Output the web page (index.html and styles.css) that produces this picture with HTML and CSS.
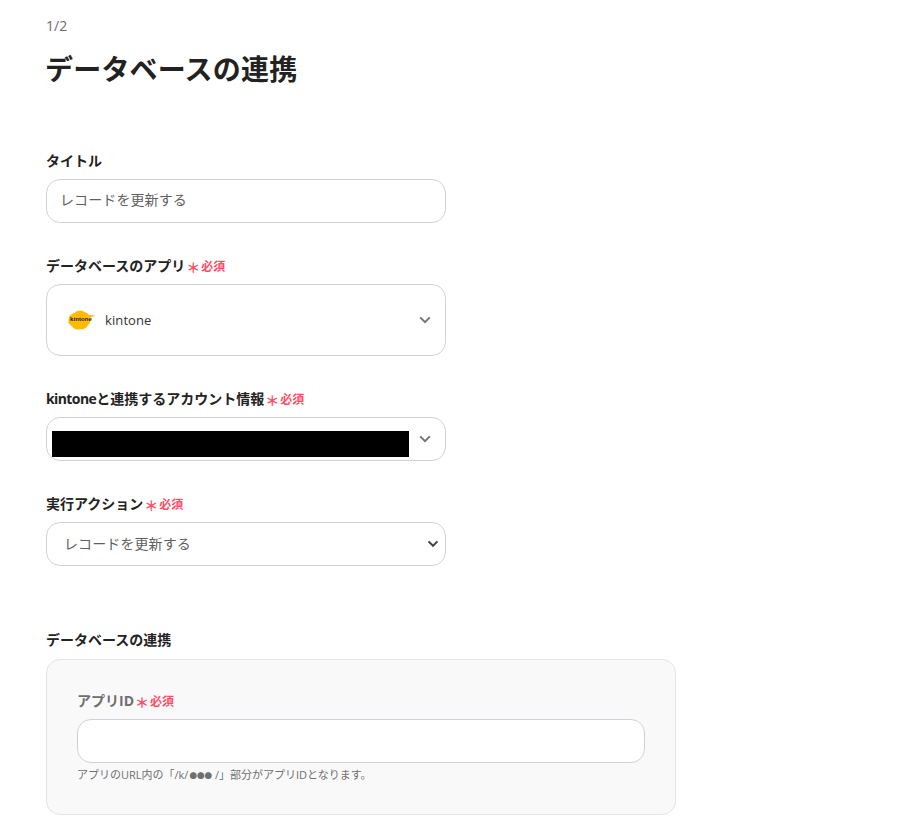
FILE: index.html
```html
<!DOCTYPE html>
<html lang="ja">
<head>
<meta charset="utf-8">
<title>データベースの連携</title>
<link rel="stylesheet" href="styles.css">
</head>
<body>
<main class="page">
  <p class="step">1/2</p>
  <h1 class="title">データベースの連携</h1>

  <section class="field field-title">
    <label class="label">タイトル</label>
    <input class="control" type="text" value="レコードを更新する">
  </section>

  <section class="field field-app">
    <label class="label">データベースのアプリ<span class="req"><span class="star">＊</span>必須</span></label>
    <div class="control picker picker-tall">
      <svg class="logo" width="29" height="20" viewBox="0 0 29 20" aria-hidden="true">
        <path d="M1.500 10C1.500 6 5 3 8 3 10 0 15 0 17 2 19 2 21 3.500 22 5L29 5.500 23 7.500C24 11 23 14 21 15 20 18 16 20 13 19 10 20.500 6 19 5 16 2 15.500 1 12 1.500 10Z" fill="#ffbb00"/>
        <text x="3" y="11" class="logo-text">kintone</text>
      </svg>
      <span class="picker-text">kintone</span>
      <svg class="chev" width="12" height="8" viewBox="0 0 12 8" aria-hidden="true"><path d="M1.200 1.400 6 6.200l4.800-4.800" fill="none" stroke="#757575" stroke-width="2"/></svg>
    </div>
  </section>

  <section class="field field-account">
    <label class="label"><span class="latin-tight">kintone</span>と連携するアカウント情報<span class="req"><span class="star">＊</span>必須</span></label>
    <div class="control picker picker-account">
      <span class="redact"></span>
      <svg class="chev" width="12" height="8" viewBox="0 0 12 8" aria-hidden="true"><path d="M1.200 1.400 6 6.200l4.800-4.800" fill="none" stroke="#757575" stroke-width="2"/></svg>
    </div>
  </section>

  <section class="field field-action">
    <label class="label">実行アクション<span class="req"><span class="star">＊</span>必須</span></label>
    <select class="control select"><option>レコードを更新する</option></select>
  </section>

  <section class="field field-db">
    <h2 class="label">データベースの連携</h2>
    <div class="panel">
      <label class="label label-muted">アプリID<span class="req"><span class="star">＊</span>必須</span></label>
      <input class="control control-wide" type="text">
      <p class="hint">アプリのURL内の「/k/<span class="dots">●●●</span>/」部分がアプリIDとなります。</p>
    </div>
  </section>
</main>
</body>
</html>
```

FILE: styles.css
```css
* { box-sizing: border-box; }
html, body { margin: 0; padding: 0; background: #fff; }
body {
  font-family: "Open Sans", "Noto Sans CJK JP", sans-serif;
  color: #222;
  height: 840px;
  overflow: hidden;
}
.page { padding: 18px 0 0 46px; }
.step { margin: 0; font-size: 14px; line-height: 16px; color: #6e6872; }
.title {
  margin: 15px 0 0 -1px;
  font-size: 28px;
  line-height: 40px;
  font-weight: 700;
  letter-spacing: 0.2px;
  color: #222;
}
.field { display: flex; flex-direction: column; align-items: flex-start; }
.field-title { margin-top: 62px; }
.field-app { margin-top: 33px; }
.field-account { margin-top: 33px; }
.field-action { margin-top: 33px; }
.field-db { margin-top: 64px; }
.label {
  display: flex;
  align-items: center;
  margin: 0 0 8px;
  height: 20px;
  font-size: 14px;
  line-height: 20px;
  font-weight: 700;
  color: #222;
}
.label-muted { color: #6f6f6f; }
.latin-tight { letter-spacing: -0.6px; }
.req {
  display: inline-flex;
  align-items: center;
  margin-left: 1px;
  padding-top: 2px;
  font-size: 12px;
  font-weight: 700;
  color: #ff4d67;
}
.star { font-size: 14px; margin-right: 1px; position: relative; top: 1px; }
.control {
  width: 400px;
  height: 44px;
  border: 1px solid #cfd2d9;
  border-radius: 14px;
  background: #fff;
  font-family: inherit;
  font-size: 14px;
  letter-spacing: 0.1px;
  color: #5f5f5f;
  padding: 0 13px 4px;
  outline: none;
}
.picker { display: flex; align-items: center; padding: 0; }
.picker-tall { height: 72px; padding: 0 14px 0 20px; }
.picker-account { padding: 0 14px 0 5px; }
.logo { flex: none; }
.logo-text { font-family: "Liberation Sans", sans-serif; font-size: 6px; font-weight: 700; fill: #2a2000; }
.picker-text { margin-left: 9px; font-size: 13px; color: #333; }
.chev { margin-left: auto; flex: none; }
.redact { display: block; width: 357px; height: 26px; background: #000; margin-top: 10px; }
.select {
  appearance: none;
  padding: 0 24px 2px 17px;
  color: #5f5f5f;
  background: #fff url("data:image/svg+xml,%3Csvg xmlns='http://www.w3.org/2000/svg' width='12' height='8' viewBox='0 0 12 8'%3E%3Cpath d='M1.500 1.400 6 5.800l4.500-4.400' fill='none' stroke='%23444' stroke-width='2'/%3E%3C/svg%3E") no-repeat right 6px center;
}
.panel {
  width: 630px;
  height: 156px;
  border: 1px solid #e2e4e8;
  border-radius: 14px;
  background: #f9f9fa;
  padding: 31px 30px 0;
  margin-top: 1px;
}
.control-wide { width: 568px; display: block; }
.hint { margin: 4px 0 0; font-size: 11px; line-height: 16px; color: #6f6f6f; }
.dots { font-size: 7.500px; margin: 0 3px 0 1px; }
```
